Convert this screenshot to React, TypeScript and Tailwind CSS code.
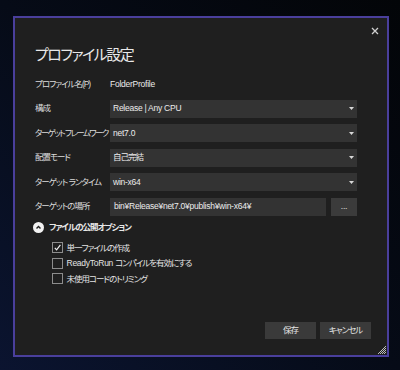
import React from "react";

const font = {
  fontFamily: '"Liberation Sans", "Noto Sans CJK JP", sans-serif',
};

function Caret() {
  return (
    <svg width="5" height="3" viewBox="0 0 5 3" className="shrink-0">
      <path d="M0 0 L5 0 L2.5 3 Z" fill="#d8d8d8" />
    </svg>
  );
}

function J({ children }: { children: React.ReactNode }) {
  return <span className="tracking-[-0.12em]">{children}</span>;
}

function SelectBox({ value }: { value: React.ReactNode }) {
  return (
    <div className="flex h-[18px] items-center justify-between bg-[#333333] pl-[3px] pr-[3px] text-[#ececec]">
      <span>{value}</span>
      <Caret />
    </div>
  );
}

function Label({ children, tight }: { children: React.ReactNode; tight?: boolean }) {
  return (
    <div className="flex h-[18px] items-center text-[#dcdcdc] whitespace-nowrap overflow-visible">
      <span className={tight ? "tracking-[-0.19em]" : "tracking-[-0.12em]"}>{children}</span>
    </div>
  );
}

function Checkbox({ checked, label }: { checked?: boolean; label: React.ReactNode }) {
  return (
    <div className="flex h-[15.5px] items-center gap-[4px]">
      <div className="flex h-[11px] w-[11px] items-center justify-center border border-[#8c8c8c]">
        {checked && (
          <svg width="9" height="9" viewBox="0 0 9 9">
            <path d="M1.8 4.8 L3.6 6.8 L7.4 1.8" fill="none" stroke="#f0f0f0" strokeWidth="1.2" />
          </svg>
        )}
      </div>
      <span className="text-[#e4e4e4] whitespace-nowrap">{label}</span>
    </div>
  );
}

export default function App() {
  return (
    <div
      className="w-[400px] h-[370px] overflow-hidden bg-gradient-to-tr from-[#0b1430] via-[#060b17] to-[#030508] pl-[13px] pt-[16px] [font-feature-settings:'palt']"
      style={font}
    >
      <div className="relative flex h-[341px] w-[376px] flex-col border-2 border-[#4a3f9c] bg-[#1f1f1f] pl-[20px] pr-[30px] text-[8.5px] tracking-[-0.03em] leading-none">
        <div className="flex justify-end pt-[9px] -mr-[22px]">
          <svg width="8" height="8" viewBox="0 0 8 8">
            <path d="M1 1 L7 7 M7 1 L1 7" stroke="#d0d0d0" strokeWidth="1.3" />
          </svg>
        </div>
        <div className="mt-[8px] h-[22px] flex items-center text-[15px] tracking-[-0.1em] text-[#e8e8e8] whitespace-nowrap">
          プロファイル設定
        </div>
        <div className="mt-[10px] grid grid-cols-[75px_1fr] gap-y-[6.5px]">
          <Label>プロファイル名(P)</Label>
          <div className="flex h-[18px] items-center text-[#ececec]">FolderProfile</div>
          <Label>構成</Label>
          <SelectBox value="Release | Any CPU" />
          <Label tight>ターゲット フレームワーク</Label>
          <SelectBox value="net7.0" />
          <Label>配置モード</Label>
          <SelectBox value={<J>自己完結</J>} />
          <Label>ターゲット ランタイム</Label>
          <SelectBox value="win-x64" />
          <Label>ターゲットの場所</Label>
          <div className="flex h-[18px] gap-[5px]">
            <div className="flex flex-1 items-center bg-[#333333] pl-[4px] text-[#ececec]">
              bin¥Release¥net7.0¥publish¥win-x64¥
            </div>
            <div className="flex w-[26px] items-center justify-center bg-[#3b3b3b] text-[#e0e0e0]">...</div>
          </div>
        </div>
        <div className="mt-[4.5px] flex h-[14px] items-center gap-[5px]">
          <div className="-ml-[2px] flex h-[11px] w-[11px] items-center justify-center rounded-full bg-[#f2f2f2]">
            <svg width="7" height="7" viewBox="0 0 7 7">
              <path d="M1.5 4.6 L3.5 2.6 L5.5 4.6" fill="none" stroke="#1f1f1f" strokeWidth="1.4" />
            </svg>
          </div>
          <span className="font-bold tracking-[-0.12em] text-[#e8e8e8]">ファイルの公開オプション</span>
        </div>
        <div className="mt-[6px] flex flex-col pl-[16.5px]">
          <Checkbox checked label={<J>単一ファイルの作成</J>} />
          <Checkbox
            label={
              <>
                ReadyToRun <J>コンパイルを有効にする</J>
              </>
            }
          />
          <Checkbox label={<J>未使用コードのトリミング</J>} />
        </div>
        <div className="mt-auto mb-[16px] -mr-[14px] flex justify-end gap-[4px]">
          <div className="flex h-[17px] w-[51px] items-center justify-center bg-[#3a3a3a] text-[#e4e4e4]">
            <J>保存</J>
          </div>
          <div className="flex h-[17px] w-[51px] items-center justify-center bg-[#3a3a3a] text-[#e4e4e4]">
            <J>キャンセル</J>
          </div>
        </div>
        <svg width="8" height="8" viewBox="0 0 8 8" className="absolute bottom-[1px] right-[1px]">
          {[
            [7, 0], [7, 2], [7, 4], [7, 6], [5, 2], [5, 4], [5, 6], [3, 4], [3, 6], [1, 6],
            [6, 1], [6, 3], [6, 5], [6, 7], [4, 3], [4, 5], [4, 7], [2, 5], [2, 7], [0, 7],
          ].map(([x, y], i) => (
            <rect key={i} x={x} y={y} width="1" height="1" fill={(x + y) % 2 === 1 ? "#bdbdbd" : "#6a6a6a"} />
          ))}
        </svg>
      </div>
    </div>
  );
}
